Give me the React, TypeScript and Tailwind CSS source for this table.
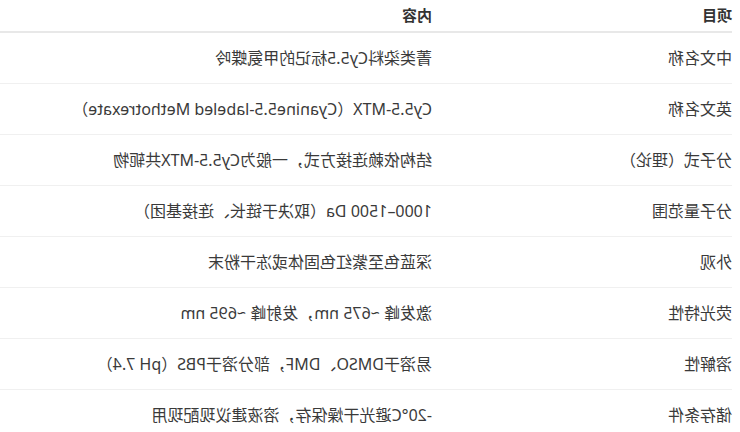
const ROWS: [string, string][] = [
  ["中文名称", "菁类染料Cy5.5标记的甲氨蝶呤"],
  ["英文名称", "Cy5.5-MTX（Cyanine5.5-labeled Methotrexate）"],
  ["分子式（理论）", "结构依赖连接方式，一般为Cy5.5-MTX共轭物"],
  ["分子量范围", "1000–1500 Da（取决于链长、连接基团）"],
  ["外观", "深蓝色至紫红色固体或冻干粉末"],
  ["荧光特性", "激发峰 ~675 nm，发射峰 ~695 nm"],
  ["溶解性", "易溶于DMSO、DMF，部分溶于PBS（pH 7.4）"],
  ["储存条件", "-20°C避光干燥保存，溶液建议现配现用"],
];

export default function App() {
  return (
    <div
      className="w-[740px] h-[432px] overflow-hidden bg-white -scale-x-100 text-[16px] text-[#3a3a3a]"
      style={{ fontFamily: '"Noto Sans", "Noto Sans CJK SC", sans-serif' }}
    >
      <div className="ml-2 w-[732px]">
        {/* 表头 */}
        <div className="flex h-[33px] items-center border-b-2 border-[#e8e8e8] text-[15px] font-bold text-[#333]">
          <div className="w-[300px]">项目</div>
          <div className="flex-1">内容</div>
        </div>

        {ROWS.map(([k, v]) => (
          <div key={k} className="flex h-[51px] items-center border-b border-[#f0f0f0]">
            <div className="w-[300px]">{k}</div>
            <div className="flex-1">{v}</div>
          </div>
        ))}
      </div>
    </div>
  );
}
